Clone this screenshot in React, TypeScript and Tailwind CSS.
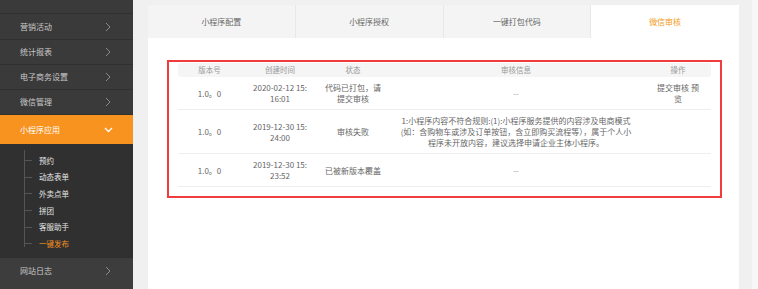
const menu = ["营销活动", "统计报表", "电子商务设置", "微信管理"];
const subMenu = ["预约", "动态表单", "外卖点单", "拼团", "客服助手", "一键发布"];
const tabs = ["小程序配置", "小程序授权", "一键打包代码", "微信审核"];

const cols = "grid grid-cols-[63px_78px_68px_258px_66px]";

const rows = [
  {
    version: "1.0。0",
    time: ["2020-02-12 15:", "16:01"],
    status: ["代码已打包，请", "提交审核"],
    info: null,
    ops: ["提交审核 预", "览"],
  },
  {
    version: "1.0。0",
    time: ["2019-12-30 15:", "24:00"],
    status: ["审核失败"],
    info: [
      "1:小程序内容不符合规则:(1):小程序服务提供的内容涉及电商模式",
      "(如：含购物车或涉及订单按钮，含立即购买流程等），属于个人小",
      "程序未开放内容，建议选择申请企业主体小程序。",
    ],
    ops: [],
  },
  {
    version: "1.0。0",
    time: ["2019-12-30 15:", "23:52"],
    status: ["已被新版本覆盖"],
    info: null,
    ops: [],
  },
];

const Right = () => (
  <svg width="6" height="10" viewBox="0 0 6 10" className="shrink-0">
    <polyline points="1,1 5,5 1,9" fill="none" stroke="#8a8a8a" strokeWidth="1" />
  </svg>
);

const Down = () => (
  <svg width="9" height="6" viewBox="0 0 9 6" className="shrink-0">
    <polyline points="1,1 4.5,4.5 8,1" fill="none" stroke="#ffffff" strokeWidth="1.3" />
  </svg>
);

const Lines = ({ items }: { items: string[] }) => (
  <div>
    {items.map((t) => (
      <div key={t}>{t}</div>
    ))}
  </div>
);

const Sidebar = () => (
  <div className="w-[133px] shrink-0 bg-[#3a3a3a] flex flex-col text-[8px] text-[#c9c9c9]">
    <div className="h-[14px] border-b border-[#303030]" />
    {menu.map((m, i) => (
      <div
        key={m}
        className={`${i === 0 ? "h-[26px]" : "h-[25px]"} flex items-center justify-between pl-[20px] pr-[22px] border-b border-[#303030]`}
      >
        <span>{m}</span>
        <Right />
      </div>
    ))}
    <div className="h-[29px] bg-[#f7931e] flex items-center justify-between pl-[20px] pr-[20px] text-white">
      <span>小程序应用</span>
      <Down />
    </div>
    <div className="h-[113px] bg-[#303030] relative pt-[8px]">
      <div className="absolute left-[24px] top-[6px] h-[97px] w-px bg-[#555]" />
      {subMenu.map((s, i) => (
        <div key={s} className="h-[16.7px] flex items-center relative">
          <div className="absolute left-[24px] w-[8px] h-px bg-[#555]" />
          <span
            className={`pl-[39px] text-[7.5px] ${i === subMenu.length - 1 ? "text-[#f7931e]" : "text-[#e6e6e6]"}`}
          >
            {s}
          </span>
        </div>
      ))}
    </div>
    <div className="flex-1 bg-[#3d3d3d] border-t border-[#2e2e2e]">
      <div className="h-[26px] flex items-center justify-between pl-[20px] pr-[22px]">
        <span>网站日志</span>
        <Right />
      </div>
    </div>
  </div>
);

const App = () => {
  return (
    <div
      className="flex h-screen min-h-[289px] overflow-hidden"
      style={{ fontFamily: '"Noto Sans CJK SC", "Noto Sans", sans-serif' }}
    >
      <Sidebar />
      <div className="flex-1 bg-[#f0f0f0] pl-[15px] pt-[5px] pr-[13px]">
        <div className="w-[591px] h-full bg-white">
          <div className="grid grid-cols-4 h-[33px] bg-[#f4f4f4] text-[8px] text-[#666]">
            {tabs.map((t, i) => (
              <div
                key={t}
                className={`flex items-center justify-center ${
                  i === 3 ? "bg-white text-[#f39a21]" : "border-r border-[#e8e8e8]"
                }`}
              >
                {t}
              </div>
            ))}
          </div>
          <div className="pt-[22px] pl-[19px] pr-[17px]">
            <div className="border-2 border-[#f03c3c] px-[9px] pt-px pb-[9px]">
              <div className={`${cols} h-[14px] items-center bg-[#f5f5f5] rounded-[3px] text-center text-[7.5px] text-[#999]`}>
                <div>版本号</div>
                <div>创建时间</div>
                <div>状态</div>
                <div>审核信息</div>
                <div>操作</div>
              </div>
              {rows.map((r, i) => (
                <div
                  key={i}
                  className={`${cols} items-center text-center py-[5px] border-b border-[#eeeeee] text-[8px] leading-[11px] text-[#666]`}
                >
                  <div>{r.version}</div>
                  <Lines items={r.time} />
                  <Lines items={r.status} />
                  {r.info ? <Lines items={r.info} /> : <div className="text-[#999]">--</div>}
                  <Lines items={r.ops} />
                </div>
              ))}
            </div>
          </div>
        </div>
      </div>
      <div className="w-[6px] shrink-0 bg-[#f7f7f7]" />
    </div>
  );
};

export default App;
